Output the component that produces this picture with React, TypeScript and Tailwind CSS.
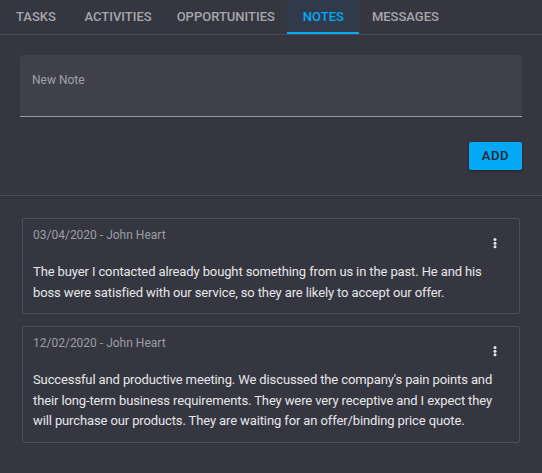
const tabs = ["Tasks", "Activities", "Opportunities", "Notes", "Messages"];

const notes = [
  {
    date: "03/04/2020",
    author: "John Heart",
    text: "The buyer I contacted already bought something from us in the past. He and his boss were satisfied with our service, so they are likely to accept our offer.",
  },
  {
    date: "12/02/2020",
    author: "John Heart",
    text: "Successful and productive meeting. We discussed the company's pain points and their long-term business requirements. They were very receptive and I expect they will purchase our products. They are waiting for an offer/binding price quote.",
  },
];

function MoreIcon() {
  return (
    <svg width="4" height="11" viewBox="0 0 4 11" className="mt-[11px] mr-[12px] shrink-0" fill="#e6e6ea">
      <circle cx="2" cy="1.6" r="1.5" />
      <circle cx="2" cy="5.2" r="1.5" />
      <circle cx="2" cy="8.8" r="1.5" />
    </svg>
  );
}

function NoteCard({ date, author, text }: { date: string; author: string; text: string }) {
  return (
    <div className="rounded-[2px] border border-[#4f4f59] px-[10px] pt-2 pb-[10px]">
      <div className="flex h-4 items-start justify-between">
        <span className="text-[12px] leading-4 text-[#9d9da3]">
          {date} - {author}
        </span>
        <MoreIcon />
      </div>
      <p className="mt-[19px] w-[468px] text-[13px] leading-[20.5px] tracking-[-0.12px] text-[#e6e6ea]">{text}</p>
    </div>
  );
}

export default function App() {
  return (
    <div
      className="h-[473px] w-[542px] overflow-hidden bg-[#363640]"
      style={{ fontFamily: "Roboto, 'Liberation Sans', sans-serif" }}
    >
      <div className="flex h-[35px] border-b border-[#4b4b55]">
        {tabs.map((t) => {
          const active = t === "Notes";
          return (
            <div
              key={t}
              className={
                active
                  ? "flex min-w-[72px] items-center justify-center border-b-2 border-[#03a9f4] bg-[#2f3b4a] px-[12.5px] pt-[2px] text-[13px] font-medium uppercase text-[#03a9f4]"
                  : "flex min-w-[72px] items-center justify-center px-[12.5px] text-[13px] font-medium uppercase text-[#a6a6ac]"
              }
            >
              {t}
            </div>
          );
        })}
      </div>

      <div className="px-5">
        <div className="mt-5 h-[62px] rounded-t-[4px] border-b border-[#9a9aa2] bg-[#40404a] px-3 pt-3">
          <span className="text-[12px] leading-4 text-[#a0a0a6]">New Note</span>
        </div>
        <div className="mt-[25px] flex justify-end">
          <button className="h-[28px] w-[53px] rounded-[2px] bg-[#03a9f4] text-[13px] font-medium tracking-[0.6px] text-[#1f2630] shadow-[0_1px_3px_rgba(0,0,0,0.4)]">
            ADD
          </button>
        </div>
      </div>

      <div className="mt-[25px] border-t border-[#4b4b55]" />

      <div className="flex flex-col gap-3 px-[22px] pt-[22px]">
        {notes.map((n) => (
          <NoteCard key={n.date} {...n} />
        ))}
      </div>
    </div>
  );
}
